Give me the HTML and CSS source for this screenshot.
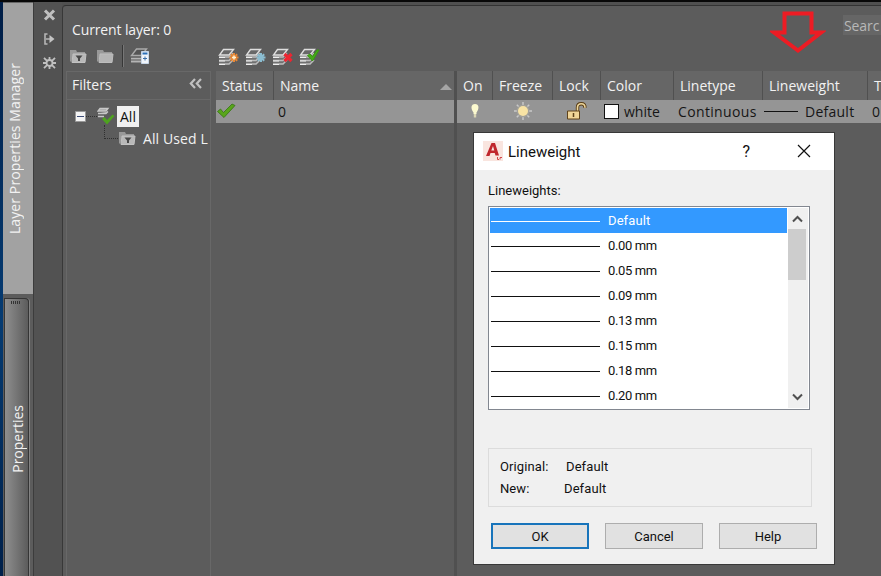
FILE: index.html
```html
<!DOCTYPE html>
<html lang="en">
<head>
    <meta charset="UTF-8">
    <meta name="viewport" content="width=device-width, initial-scale=1.0">
    <title>Layer Properties Manager</title>
    <link rel="stylesheet" href="styles.css">
</head>
<body>
    <!-- shared icon shapes -->
    <svg class="defs" width="0" height="0">
        <symbol id="folder" viewBox="0 0 18 15">
            <path d="M1 12.500V1h6l1 2h8v2H4L2.500 12.500z" fill="#999"/>
            <path d="M4 5h13l-1 8.500H3z" fill="#b5b5b5" stroke="#bebebe"/>
        </symbol>
        <symbol id="folder-filter" viewBox="0 0 18 15">
            <path d="M1 12.500V1h6l1 2h8v2H4L2.500 12.500z" fill="#999"/>
            <path d="M4 5h13l-1 8.500H3z" fill="#b8b8b8" stroke="#c2c2c2"/>
            <path d="M6.500 6.500h7L11 9.500V12H9V9.500z" fill="#484848"/>
        </symbol>
        <symbol id="layers" viewBox="0 0 21 18">
            <path d="M1 9l4-3.500h10L12 9v7.500H1z" fill="#707070"/>
            <path d="M1 16h10l4-4M1 12.500h10l4-4M1 9h10l4-4" fill="none" stroke="#bcbcbc" stroke-width="1.500"/>
            <path d="M1 16.500h6M1 13h6M1 9.500h6" fill="none" stroke="#eee"/>
            <path d="M5.500 1.500h10l-4.500 5.500H1.500z" fill="#686868" stroke="#dedede" stroke-width="1.400"/>
        </symbol>
        <symbol id="check" viewBox="0 0 20 17">
            <path d="M1.500 9.500L4.500 7l3 3.500L16 2l3 1.500L8 15.500z" fill="#59a51b" stroke="#347611" stroke-width=".8"/>
        </symbol>
    </svg>

    <div class="workspace">
        <div class="desktop"></div>

        <div class="tabs">
            <div class="tab tab-active"><span>Layer Properties Manager</span></div>
            <div class="tab tab-docked">
                <div class="grip"></div>
                <span>Properties</span>
            </div>
        </div>

        <div class="rail">
            <svg width="13" height="12" viewBox="0 0 13 12"><path d="M2 1.500l9 9M11 1.500l-9 9" stroke="#c0c0c0" stroke-width="3"/></svg>
            <svg width="13" height="12" viewBox="0 0 13 12"><path d="M4.500 1H2v10h2.500M3 6h6" fill="none" stroke="#b5b5b5" stroke-width="1.600"/><path d="M6.500 2l5 4-5 4z" fill="#c4c4c4"/></svg>
            <svg width="13" height="12" viewBox="0 0 13 12"><path d="M1 .8l3 3M12 .8l-3 3M1 11.200l3-3M12 11.200l-3-3M6.500 0v3M6.500 9v3M0 6h3M10 6h3" stroke="#c0c0c0" stroke-width="1.800"/><circle cx="6.500" cy="6" r="3" fill="none" stroke="#c0c0c0" stroke-width="1.800"/></svg>
        </div>

        <div class="palette">
            <div class="palette-top">
                <span class="current">Current layer: 0</span>
                <div class="search">Searc</div>
            </div>

            <div class="toolbar">
                <div class="tools tools-left">
                    <svg width="18" height="15"><use href="#folder-filter"/></svg>
                    <svg width="18" height="15"><use href="#folder"/></svg>
                    <i class="separator"></i>
                    <svg width="21" height="18" viewBox="0 0 21 18">
                        <path d="M1 12h10v4H1z" fill="#777"/>
                        <path d="M6.500 2h10l-5 6.500H1.500z" fill="#555" stroke="#aaa" stroke-width="1.400"/>
                        <path d="M1 11.500h10M1 14.500h10" stroke="#b4b4b4" stroke-width="1.500"/>
                        <path d="M11.500 4.500h7v12h-7z" fill="#f1f5fa" stroke="#c7d6e8"/>
                        <path d="M12.500 6.500h5" stroke="#2b70b9" stroke-width="2"/>
                        <path d="M13 11.500h4M15 9.500v4" stroke="#3b6ea8"/>
                    </svg>
                </div>
                <div class="tools tools-right">
                    <svg width="21" height="18"><use href="#layers"/><path d="M16 5v9M11.500 9.500h9M12.800 6.300l6.400 6.400M19.200 6.300l-6.400 6.400" stroke="#e98733" stroke-width="2"/><path d="M16 7.500v4M14 9.500h4" stroke="#fff3d5" stroke-width="1.500"/></svg>
                    <svg width="21" height="18"><use href="#layers"/><path d="M16 5v9M11.500 9.500h9M12.800 6.300l6.400 6.400M19.200 6.300l-6.400 6.400" stroke="#8bbdd1" stroke-width="2"/></svg>
                    <svg width="21" height="18"><use href="#layers"/><path d="M12.500 6l7 7M19.500 6l-7 7" stroke="#ec2632" stroke-width="3.200"/></svg>
                    <svg width="21" height="18"><use href="#layers"/><path d="M8.500 7.500L11 6l2.500 2.500L18 2h2l-6.500 11z" fill="#45aa1b" stroke="#38990f"/></svg>
                </div>
            </div>

            <div class="panes">
                <div class="filters">
                    <div class="filters-head">
                        <span>Filters</span>
                        <svg width="13" height="12" viewBox="0 0 13 12"><path d="M6 1L1.800 5.500 6 10M12 1L7.800 5.500l4.200 4.500" fill="none" stroke="#c0c0c0" stroke-width="2.200"/></svg>
                    </div>
                    <div class="tree">
                        <div class="node">
                            <svg width="11" height="11" viewBox="0 0 11 11"><path d="M.5.500h10v10H.5z" fill="#f4f4f4" stroke="#999"/><path d="M2 5.500h7" stroke="#3c4c78"/></svg>
                            <i class="dots"></i>
                            <svg width="18" height="18" viewBox="0 0 18 18">
                                <path d="M3 1.500h8L9 4H1zM1 6.500h8l2-2M1 9.500h6" fill="#aaa" stroke="#c8c8c8" stroke-width="1.300"/>
                                <path d="M5 12l2.500-2 2.500 3 5.500-5.500L17.500 9 10 17.500z" fill="#4ea31f"/>
                            </svg>
                            <span class="selected">All</span>
                        </div>
                        <div class="node child">
                            <i class="elbow"></i>
                            <svg width="18" height="15"><use href="#folder-filter"/></svg>
                            <span>All Used L</span>
                        </div>
                    </div>
                </div>

                <div class="grid grid-name">
                    <div class="cell head">Status</div>
                    <div class="cell head name-head">Name<i class="sort"></i></div>
                    <div class="cell status"><svg width="20" height="17"><use href="#check"/></svg></div>
                    <div class="cell name">0</div>
                </div>

                <div class="grid grid-props">
                    <div class="cell head">On</div>
                    <div class="cell head">Freeze</div>
                    <div class="cell head">Lock</div>
                    <div class="cell head">Color</div>
                    <div class="cell head">Linetype</div>
                    <div class="cell head">Lineweight</div>
                    <div class="cell head">T</div>

                    <div class="cell icon">
                        <svg width="10" height="16" viewBox="0 0 10 16"><path d="M5 1C.8 1 .5 5.500 3.500 9.500V11h3V9.500C9.500 5.500 9.200 1 5 1z" fill="#fbf9cf"/><path d="M3.800 11h2.400v3.500H3.800z" fill="#dad6b4"/></svg>
                    </div>
                    <div class="cell icon">
                        <svg width="20" height="20" viewBox="0 0 20 20"><path d="M10 1v18M1 10h18M3.800 3.800l12.400 12.400M16.200 3.800L3.800 16.200" stroke="#c9c9c9" stroke-width="1.500"/><circle cx="10" cy="10" r="6.300" fill="#a3a19a"/><circle cx="10" cy="10" r="5" fill="#f8e3a4"/></svg>
                    </div>
                    <div class="cell icon lock">
                        <svg width="21" height="18" viewBox="0 0 21 18"><path d="M11.500 9V5.500q0-3.700 3.800-3.700 3.700 0 3.700 4" fill="none" stroke="#5b3e15" stroke-width="3.400"/><path d="M11.500 9V5.500q0-3.700 3.800-3.700 3.700 0 3.700 4" fill="none" stroke="#ecd59b" stroke-width="1.600"/><path d="M1.500 9h12v8h-12z" fill="#f1d597" stroke="#60431a"/><path d="M7.500 11v4" stroke="#60431a" stroke-width="1.500"/></svg>
                    </div>
                    <div class="cell color"><i class="swatch"></i>white</div>
                    <div class="cell linetype">Continuous</div>
                    <div class="cell weight"><i class="sample"></i>Default</div>
                    <div class="cell transparency">0</div>
                </div>
            </div>
        </div>
    </div>

    <!-- pointer arrow over the Lineweight column -->
    <svg class="arrow" width="56" height="44" viewBox="0 0 56 44"><path d="M14.500 3.500h27v19H51L28 40.500 4 22.500h10.500z" fill="none" stroke="#ed1c24" stroke-width="4"/></svg>

    <div class="dialog">
        <div class="titlebar">
            <svg width="20" height="20" viewBox="0 0 20 20">
                <path d="M0 0h20v20H0z" fill="#f9e5df"/>
                <path d="M3 15L8.500 2h3.500l4 12.500h-3.500L11.700 12H7.500L6.500 15zM8.300 9.500h3L10 5z" fill="#c0272d" fill-rule="evenodd"/>
                <path d="M14.500 16v2.500H16M17 18.500V16.500h2" fill="none" stroke="#d3474a"/>
            </svg>
            <span class="title">Lineweight</span>
            <span class="help">?</span>
            <svg width="14" height="14" viewBox="0 0 14 14"><path d="M1 1l12 12M13 1L1 13" stroke="#111" stroke-width="1.200"/></svg>
        </div>
        <div class="dialog-body">
            <div class="label">Lineweights:</div>
            <div class="listbox">
                <ul>
                    <li class="active"><i></i>Default</li>
                    <li><i></i>0.00 mm</li>
                    <li><i></i>0.05 mm</li>
                    <li><i></i>0.09 mm</li>
                    <li><i></i>0.13 mm</li>
                    <li><i></i>0.15 mm</li>
                    <li><i></i>0.18 mm</li>
                    <li><i></i>0.20 mm</li>
                </ul>
                <div class="scrollbar">
                    <svg width="11" height="8" viewBox="0 0 11 8"><path d="M1 6.500L5.500 2 10 6.500" fill="none" stroke="#505050" stroke-width="2"/></svg>
                    <div class="thumb"></div>
                    <svg class="down" width="11" height="8" viewBox="0 0 11 8"><path d="M1 1.500L5.500 6 10 1.500" fill="none" stroke="#505050" stroke-width="2"/></svg>
                </div>
            </div>
            <div class="summary">
                <div><span>Original:</span>Default</div>
                <div class="new"><span>New:</span>Default</div>
            </div>
            <div class="buttons">
                <button class="default">OK</button>
                <button>Cancel</button>
                <button>Help</button>
            </div>
        </div>
    </div>
</body>
</html>
```
FILE: styles.css
```css
* {
    box-sizing: border-box;
}

body {
    margin: 0;
    width: 881px;
    height: 576px;
    position: relative;
    overflow: hidden;
    background-color: #505050;
    font-family: "Open Sans", "Noto Sans", sans-serif;
    font-size: 14px;
    color: #f2f2f2;
}

svg {
    display: block;
    flex: none;
}

.defs {
    position: absolute;
}

.workspace {
    display: flex;
    height: 576px;
    border-top: 2px solid #080808;
}

.desktop {
    width: 3px;
    flex: none;
    background: linear-gradient(#001d46, #053b72 55%, #00204a);
}

/* vertical palette tabs */
.tabs {
    width: 30px;
    flex: none;
    display: flex;
    flex-direction: column;
    background-color: #5c5c5c;
}

.tab {
    display: flex;
    flex-direction: column;
    align-items: center;
}

.tab span {
    writing-mode: vertical-rl;
    transform: rotate(180deg);
    line-height: 20px;
    white-space: nowrap;
}

.tab-active {
    height: 292px;
    padding: 60px 7px 0 0;
    background-color: #a2a2a2;
    border-top: 1px solid #666;
}

.tab-active span {
    letter-spacing: 0.1px;
}

.tab-docked {
    flex: 1;
    margin: 4px 4px 0 1px;
    border: 1px solid #353535;
    border-bottom: none;
    border-radius: 0 4px 0 0;
    background: linear-gradient(90deg, #8e8e8e, #5c5c5c);
    box-shadow: 1px 0 #838383;
}

.tab-docked span {
    margin: 101px 0 0 2px;
}

.grip {
    width: 10px;
    height: 3px;
    margin-top: 2px;
    margin-right: 2px;
    background: repeating-linear-gradient(90deg, #333 0 1px, transparent 1px 2px);
}

.rail {
    width: 29px;
    flex: none;
    display: flex;
    flex-direction: column;
    align-items: center;
    gap: 12px;
    padding-top: 7px;
    padding-left: 2px;
    background-color: #525252;
    border-left: 1px solid #3c3c3c;
}

.palette {
    flex: 1;
    min-width: 0;
    margin-top: 3px;
    display: flex;
    flex-direction: column;
    overflow: hidden;
    background-color: #5c5c5c;
    border-top: 1px solid #333;
    border-left: 1px solid #383838;
    border-radius: 4px 0 0 0;
}

.palette-top {
    height: 36px;
    flex: none;
    display: flex;
    justify-content: space-between;
    padding: 9px 0 0 9px;
}

.current {
    line-height: 30px;
    letter-spacing: -0.13px;
}

.search {
    width: 38px;
    height: 20px;
    padding-left: 1px;
    white-space: nowrap;
    line-height: 21px;
    letter-spacing: -0.1px;
    color: #b8b8b8;
    background-color: #666;
}

.toolbar {
    height: 29px;
    flex: none;
    display: flex;
}

.tools {
    display: flex;
    align-items: center;
}

.tools-left {
    width: 149px;
    padding-left: 6px;
    padding-bottom: 1px;
    gap: 9px;
}

.separator {
    width: 2px;
    height: 22px;
    margin-left: -1px;
    border-left: 1px solid #373737;
    border-right: 1px solid #777;
}

.tools-left svg:last-child {
    margin-left: -3px;
}

.tools-right {
    padding-left: 6px;
    gap: 6px;
}

.panes {
    flex: 1;
    display: flex;
}

/* filter tree */
.filters {
    width: 145px;
    flex: none;
    margin: 0 5px 0 3px;
    border: 1px solid #686868;
    border-bottom: none;
    overflow: hidden;
}

.filters-head {
    height: 28px;
    display: flex;
    justify-content: space-between;
    align-items: center;
    padding: 0 8px 3px 5px;
    border-bottom: 1px solid #686868;
}

.tree {
    padding: 5px 0 0 8px;
}

.node {
    height: 22px;
    display: flex;
    align-items: center;
    white-space: nowrap;
}

.dots {
    width: 11px;
    border-top: 1px dotted #303030;
}

.selected {
    padding: 0 3px;
    margin-left: 2px;
    line-height: 21px;
    color: #111;
    background-color: #f0f0f0;
}

.child {
    padding-left: 29px;
}

.elbow {
    width: 14px;
    height: 14px;
    margin-top: -12px;
    border-left: 1px dotted #303030;
    border-bottom: 1px dotted #303030;
}

.child span {
    margin-left: 7px;
    letter-spacing: 0.1px;
}

/* layer list */
.grid {
    display: grid;
    grid-template-rows: 29px 23px;
    align-content: start;
}

.grid-name {
    width: 241px;
    flex: none;
    grid-template-columns: 58px 180px;
    border-right: 3px solid #505050;
}

.grid-props {
    grid-template-columns: 36px 60px 48px 73px 89px 105px 60px;
}

.cell {
    display: flex;
    align-items: center;
    white-space: nowrap;
    color: #151515;
    background-color: #959595;
}

.head {
    padding-left: 6px;
    color: #f2f2f2;
    background-color: #666;
    border-right: 1px solid #505050;
}

.name-head {
    justify-content: space-between;
    padding-right: 2px;
    border-right: none;
}

.sort {
    margin-top: 3px;
    border: 6px solid transparent;
    border-top: none;
    border-bottom-color: #a5a5a5;
}

.status {
    padding-bottom: 2px;
}

.name {
    padding-left: 4px;
}

.icon {
    justify-content: center;
    padding-bottom: 2px;
}

.lock {
    padding-left: 0;
    padding-right: 1px;
}

.color {
    gap: 5px;
    padding-left: 3px;
}

.swatch {
    width: 15px;
    height: 15px;
    background-color: #fff;
    border: 1px solid #111;
}

.linetype {
    padding-left: 4px;
    letter-spacing: 0.35px;
}

.weight {
    gap: 7px;
    padding-left: 1px;
    letter-spacing: 0.25px;
}

.sample {
    width: 34px;
    height: 1px;
    background-color: #111;
}

.transparency {
    padding-left: 4px;
}

.arrow {
    position: absolute;
    left: 770px;
    top: 10px;
}

/* lineweight dialog */
.dialog {
    position: absolute;
    left: 473px;
    top: 132px;
    width: 362px;
    height: 433px;
    border: 1px solid #383838;
    background-color: #f0f0f0;
    color: #111;
    font-family: Roboto, "Liberation Sans", sans-serif;
    font-size: 13px;
}

.titlebar {
    height: 37px;
    display: flex;
    align-items: center;
    padding: 0 23px 1px 9px;
    background-color: #fff;
}

.title {
    flex: 1;
    margin-left: 5px;
    padding-top: 2px;
    font-size: 15px;
}

.help {
    margin-right: 47px;
    font-size: 16px;
}

.dialog-body {
    padding: 12px 14px;
}

.label {
    height: 24px;
    line-height: 17px;
}

.listbox {
    width: 322px;
    height: 204px;
    display: flex;
    padding: 1px;
    background-color: #fff;
    border: 1px solid #828790;
}

.listbox ul {
    flex: 1;
    margin: 0;
    padding: 0;
    list-style: none;
}

.listbox li {
    height: 25px;
    display: flex;
    align-items: center;
    padding-left: 1px;
    letter-spacing: -0.35px;
}

.listbox li i {
    width: 109px;
    height: 1px;
    margin: 2px 8px 0 0;
    background-color: #111;
}

.listbox .active {
    color: #fff;
    background-color: #3399ff;
    letter-spacing: 0.1px;
}

.listbox .active i {
    background-color: #fff;
}

.scrollbar {
    width: 20px;
    margin-left: 1px;
    display: flex;
    flex-direction: column;
    align-items: center;
    padding: 7px 2px 7px 0;
    background-color: #f0f0f0;
}

.thumb {
    width: 18px;
    height: 51px;
    flex: none;
    margin-top: 6px;
    background-color: #cdcdcd;
}

.down {
    margin-top: auto;
}

.summary {
    width: 324px;
    height: 59px;
    margin-top: 38px;
    padding: 7px 11px;
    border: 1px solid #dcdcdc;
    line-height: 22px;
    letter-spacing: 0.1px;
}

.summary span {
    display: inline-block;
    width: 66px;
}

.summary .new span {
    width: 64px;
}

.buttons {
    display: flex;
    gap: 16px;
    margin: 16px 0 0 3px;
}

button {
    width: 98px;
    height: 26px;
    padding: 0;
    font: inherit;
    color: #111;
    background-color: #e1e1e1;
    border: 1px solid #adadad;
}

.default {
    border: 2px solid #1874bb;
}
```
